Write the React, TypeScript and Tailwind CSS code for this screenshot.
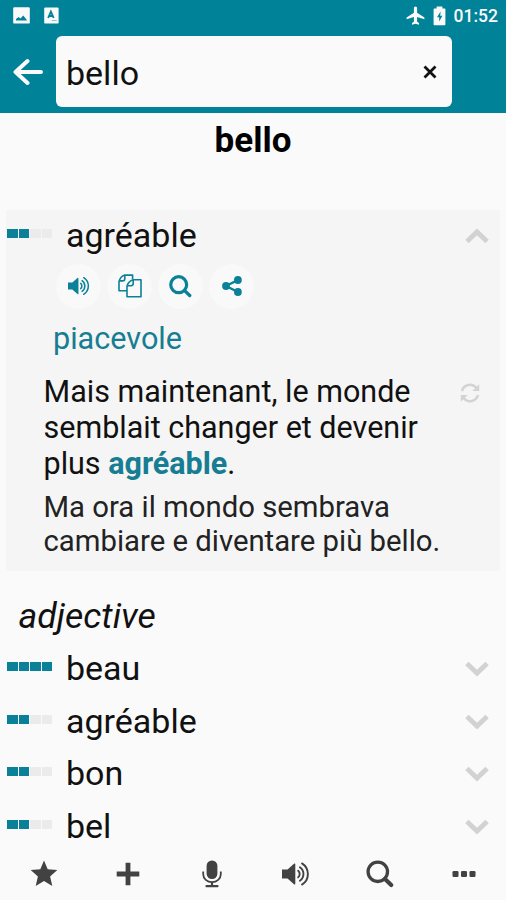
import type { ReactNode } from "react";

interface Translation {
  word:  string;
  level: number;
}

const TRANSLATIONS: Translation[] = [
  { word: "beau",     level: 4 },
  { word: "agréable", level: 2 },
  { word: "bon",      level: 2 },
  { word: "bel",      level: 2 },
];

// Icons

function ImageIcon() {
  return (
    <svg width="17" height="17" viewBox="0 0 17 17">
      <rect x="0.2" y="0.2" width="16.6" height="16.4" rx="1.2" fill="#fafafa" />
      <path d="M3 13.400V12l2.600-2 1.800 1.500L10.300 8.500l3.900 4.900z" fill="#008299" />
    </svg>
  );
}

function LetterIcon() {
  return (
    <svg width="15" height="17" viewBox="0 0 15 17">
      <rect x="0.2" y="0.4" width="14.4" height="16.200" rx="1.2" fill="#fafafa" />
      <path d="M4.1 11 6.900 4.600 9.700 11M5 9h3.800" fill="none" stroke="#008299" strokeWidth="1.8" />
      <path d="M7.8 13.500h5" stroke="#7fbfca" strokeWidth="0.9" />
    </svg>
  );
}

function PlaneIcon() {
  return (
    <svg width="19" height="20" viewBox="0 0 19 20" fill="#fafafa">
      <path d="M18.400 13.300v-1.900l-7.300-4.600V2.200C11.100 1.100 10.400.4 9.500.4S7.900 1.100 7.900 2.200v4.600L.6 11.400v1.900l7.300-2.200v4.600L6 17.100v1.600l3.500-1 3.500 1v-1.600l-1.900-1.400v-4.600z" />
    </svg>
  );
}

function BatteryIcon() {
  return (
    <svg width="13" height="20" viewBox="0 0 13 20">
      <path d="M3.600.4h5.800v2h2c.6 0 1 .4 1 1v14.800c0 .6-.4 1-1 1H1.600c-.6 0-1-.4-1-1V3.400c0-.6.4-1 1-1h2z" fill="#fafafa" />
      <path d="M7.600 5.600 4 11.200h2.200v4.200l3.200-5.700H7.200z" fill="#008299" />
    </svg>
  );
}

function BackIcon() {
  return (
    <svg width="31" height="28" viewBox="0 0 31 28" fill="none" stroke="#fafafa" strokeWidth="4" strokeLinecap="round" strokeLinejoin="round">
      <path d="M14.500 3 2.500 14l12 11M3.500 14h24.500" />
    </svg>
  );
}

function VolumeIcon({ size }: { size: number }) {
  return (
    <svg width={size} height={size} viewBox="0 0 28 28">
      <path d="M0 9.500h5.500L12 3.700c.7-.6 1.300-.3 1.300.5v19.600c0 .8-.6 1.100-1.300.5l-6.500-5.800H0z" fill="currentColor" />
      <g fill="none" stroke="currentColor" strokeWidth="1.900" strokeLinecap="round">
        <path d="M16.200 10.700a4.400 4.400 0 0 1 0 6.600" />
        <path d="M17.900 7.200a8.300 8.300 0 0 1 0 13.600" />
        <path d="M20 3.400a12.500 12.500 0 0 1 0 21.200" />
      </g>
    </svg>
  );
}

function CopyIcon() {
  return (
    <svg width="24" height="24" viewBox="0 0 24 24" fill="none" stroke="currentColor" strokeWidth="1.600" strokeLinejoin="round">
      <path d="M9 16.800H1V7.400Q2.500 2.500 6.800 1.100h7.800v4.200M6.800 1.100v3.700q0 2.100-2.100 2.100H1.500" />
      <path d="M15.200 5.800H23v17H9V12Q10.500 7.200 15.200 5.800zM15.200 5.800v3.800q0 2.100-2.100 2.100H9.400" />
    </svg>
  );
}

function SearchIcon({ size, weight }: { size: number; weight: number }) {
  return (
    <svg width={size} height={size} viewBox="0 0 28 28" fill="none" stroke="currentColor" strokeWidth={weight}>
      <circle cx="11.800" cy="11.800" r="9.700" />
      <path d="m19 19 6.200 6" strokeWidth="4.100" strokeLinecap="round" />
    </svg>
  );
}

function ShareIcon() {
  return (
    <svg width="20" height="20" viewBox="0 0 20 20" fill="currentColor">
      <path d="m16 4-12 6 12 6" fill="none" stroke="currentColor" strokeWidth="2.400" />
      <circle cx="15.900" cy="4" r="3.900" />
      <circle cx="4" cy="10" r="3.900" />
      <circle cx="15.900" cy="16" r="3.900" />
    </svg>
  );
}

function RefreshIcon() {
  return (
    <svg width="20" height="20" viewBox="0 0 20 20" fill="none" stroke="#d3d3d3" strokeWidth="2.500">
      <path d="M2 8a8.200 8.200 0 0 1 14.200-3.200M18 12a8.200 8.200 0 0 1-14.200 3.200" />
      <path d="M19.200 1.200v6.900h-6.900zM.8 18.800v-6.900h6.900z" fill="#d3d3d3" stroke="none" />
    </svg>
  );
}

function Chevron({ up = false }: { up?: boolean }) {
  return (
    <svg width="24" height="16" viewBox="0 0 24 16" fill="none" stroke="#d2d2d2" strokeWidth="4.800" className={up ? "rotate-180" : ""}>
      <path d="m1.900 2.400 10.100 9.700 10.100-9.700" />
    </svg>
  );
}

function StarIcon() {
  return (
    <svg width="28" height="27" viewBox="0 0 28 27" fill="currentColor">
      <path d="m14 .6 3.700 8.700 9.600.8-7.200 6.400 2.200 9.500L14 21.100 5.700 26l2.200-9.500L.7 10.100l9.600-.8z" />
    </svg>
  );
}

function PlusIcon() {
  return (
    <svg width="24" height="24" viewBox="0 0 24 24" fill="currentColor">
      <path d="M9.600.7h4.800v8.900h8.900v4.800h-8.900v8.900H9.600v-8.900H.7V9.600h8.900z" />
    </svg>
  );
}

function MicIcon() {
  return (
    <svg width="20" height="28" viewBox="0 0 20 28" fill="none" stroke="currentColor">
      <rect x="4.600" y=".5" width="10.800" height="18.500" rx="5.200" fill="currentColor" stroke="none" />
      <path d="M1.200 11.500v2.800a8.800 7.800 0 0 0 17.600 0v-2.800" strokeWidth="1.800" />
      <path d="M10 22v4" strokeWidth="2.200" />
      <path d="M4.500 26.200h11" strokeWidth="2.200" strokeLinecap="round" />
    </svg>
  );
}

function DotsIcon() {
  return (
    <svg width="24" height="8" viewBox="0 0 24 8" fill="currentColor">
      <rect x=".5" y="1" width="6" height="6" rx="1.200" />
      <rect x="9" y="1" width="6" height="6" rx="1.200" />
      <rect x="17.500" y="1" width="6" height="6" rx="1.200" />
    </svg>
  );
}

// Four small boxes that show how common a translation is
function Frequency({ level }: { level: number }) {
  return (
    <div className="mr-[14px] mb-[5px] flex w-[45px] shrink-0 justify-between">
      {[1, 2, 3, 4].map(i => (
        <span key={i} className={`h-[9px] w-[10.5px] ${i <= level ? "bg-[#0a8198]" : "bg-[#ebebeb]"}`} />
      ))}
    </div>
  );
}

function WordRow({ word, level, open = false }: Translation & { open?: boolean }) {
  return (
    <div className="flex h-[52.5px] items-center">
      <Frequency level={level} />
      <span className="flex-1 pb-[2px] text-[34px] leading-[40px]">{word}</span>
      <Chevron up={open} />
    </div>
  );
}

function RoundButton({ label, children }: { label: string; children: ReactNode }) {
  return (
    <button aria-label={label} className="flex size-[45px] items-center justify-center rounded-full bg-[#f9f9f9]">
      {children}
    </button>
  );
}

export default function App() {
  return (
    <div className="flex h-[900px] w-[506px] flex-col overflow-hidden bg-[#fafafa] font-[Roboto,sans-serif] text-[#111]">
      <header className="h-[113px] shrink-0 bg-[#008299]">
        <div className="flex h-9 items-center justify-between pr-[8px] pb-[5px] pl-[13px] text-[#fafafa]">
          <div className="flex items-center gap-[14px]">
            <ImageIcon />
            <LetterIcon />
          </div>
          <div className="flex items-center">
            <PlaneIcon />
            <span className="ml-[8px]"><BatteryIcon /></span>
            <span className="ml-[8px] text-[17.5px] leading-5 font-medium">01:52</span>
          </div>
        </div>
        <div className="flex items-center pl-[13px]">
          <BackIcon />
          <div className="ml-[11.500px] flex h-[71px] w-[396px] items-center justify-between rounded-[6px] bg-[#fafafa] pr-[15px] pl-[10.5px]">
            <span className="pt-[2px] text-[34px] leading-10">bello</span>
            <svg width="14" height="14" viewBox="0 0 14 14" stroke="#111" strokeWidth="2.800">
              <path d="m1.500 1.500 11 11M12.500 1.500l-11 11" />
            </svg>
          </div>
        </div>
      </header>

      <h1 className="h-[97px] shrink-0 pt-[8px] text-center text-[35px] leading-10 font-bold text-black">bello</h1>

      <section className="mx-[6px] h-[361px] shrink-0 bg-[#f5f5f5] pr-[11px] pl-px">
        <WordRow word="agréable" level={2} open />
        <div className="mt-px ml-[49px] flex gap-[6px] text-[#0a8198]">
          <RoundButton label="Listen"><VolumeIcon size={22} /></RoundButton>
          <RoundButton label="Copy"><CopyIcon /></RoundButton>
          <RoundButton label="Search"><SearchIcon size={23} weight={3.9} /></RoundButton>
          <RoundButton label="Share"><ShareIcon /></RoundButton>
        </div>
        <p className="mt-[12px] ml-[46px] text-[30.6px] leading-9 text-[#167d92]">piacevole</p>
        <div className="mt-[17px] flex justify-between pl-[36.5px]">
          <div className="whitespace-nowrap">
            <p className="text-[30.5px] leading-9">
              Mais maintenant, le monde<br />
              semblait changer et devenir<br />
              plus <b className="text-[#167d92]">agréable</b>.
            </p>
            <p className="mt-[8px] text-[29.3px] leading-[34px] text-[#222]">
              Ma ora il mondo sembrava<br />
              cambiare e diventare più bello.
            </p>
          </div>
          <div className="-ml-6 pt-[9px] pr-[9px]"><RefreshIcon /></div>
        </div>
      </section>

      <h2 className="mt-[25px] ml-[18.5px] h-[47px] shrink-0 text-[35.6px] leading-10 italic">adjective</h2>
      <div className="h-[210px] shrink-0 pr-[17px] pl-[7px]">
        {TRANSLATIONS.map(t => <WordRow key={t.word} {...t} />)}
      </div>

      <nav className="flex flex-1 items-center pb-[6px] pl-[2px] text-[#424242]">
        <div className="flex flex-1 justify-center"><StarIcon /></div>
        <div className="flex flex-1 justify-center"><PlusIcon /></div>
        <div className="flex flex-1 justify-center"><MicIcon /></div>
        <div className="flex flex-1 justify-center"><VolumeIcon size={28} /></div>
        <div className="flex flex-1 justify-center"><SearchIcon size={28} weight={3.3} /></div>
        <div className="flex flex-1 justify-center"><DotsIcon /></div>
      </nav>
    </div>
  );
}
